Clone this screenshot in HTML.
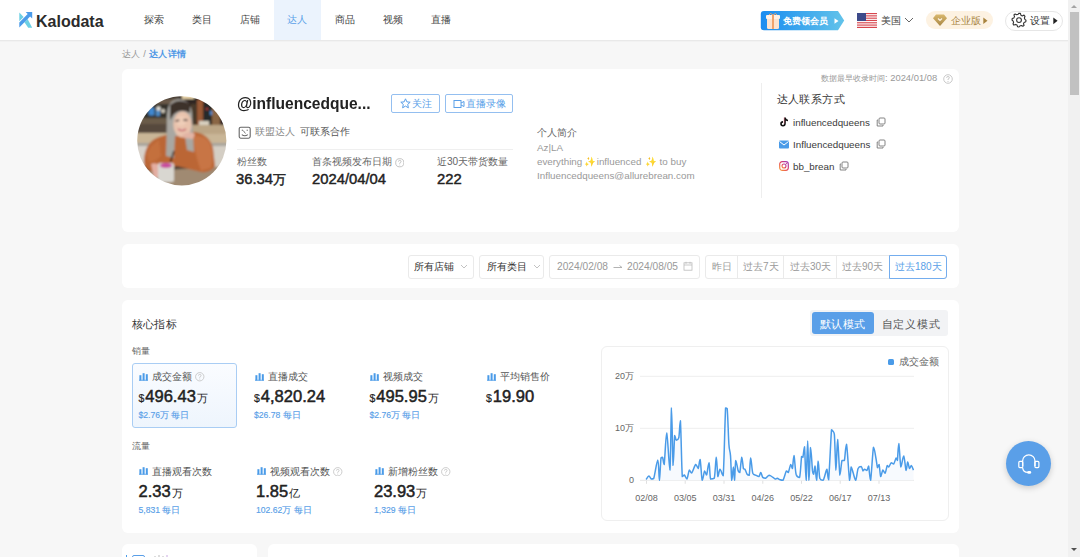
<!DOCTYPE html>
<html><head><meta charset="utf-8">
<style>
*{box-sizing:border-box;margin:0;padding:0}
html,body{width:1080px;height:557px;overflow:hidden}
body{background:#f7f7f7;font-family:"Liberation Sans",sans-serif;color:#333;position:relative}
.a{position:absolute;white-space:nowrap}
.hdr{position:absolute;left:0;top:0;width:1068px;height:40px;background:#fff;box-shadow:0 1px 0 #e9e9e9,0 2px 1px rgba(0,0,0,.02);z-index:2}
.nav{position:absolute;top:0;height:40px;width:47.6px;line-height:40px;text-align:center;font-size:10.2px;color:#444}
.card{position:absolute;background:#fff;border-radius:6px}
.sb{position:absolute;left:1068px;top:0;width:12px;height:557px;background:#f1f1f1}
</style></head><body>

<!-- header -->
<div class="hdr">
  <svg class="a" style="left:14px;top:6px" width="24" height="26" viewBox="14 6 24 26">
    <polygon points="19.3,12.4 23.6,16.9 19.3,21.3" fill="#6ccfe4"/>
    <polygon points="24.4,22.2 27.6,19 32.2,27.7 28.2,27.7" fill="#6ccfe4"/>
    <polygon points="19.3,27.4 19.3,22.4 27.7,14.1 25.7,12.1 32.2,12.1 32.2,18.4 30.1,16.5" fill="#4b9bea"/>
  </svg>
  <div class="a" style="left:36px;top:12px;font-size:16px;font-weight:bold;color:#2b2b2b;line-height:20px">Kalodata</div>
  <div class="nav" style="left:130.2px">探索</div>
  <div class="nav" style="left:178.0px">类目</div>
  <div class="nav" style="left:225.8px">店铺</div>
  <div class="nav" style="left:273.6px;background:#ebf3fd;color:#5a9fe8">达人</div>
  <div class="nav" style="left:321.4px">商品</div>
  <div class="nav" style="left:369.2px">视频</div>
  <div class="nav" style="left:417.0px">直播</div>

  <!-- free member badge -->
  <svg class="a" style="left:760px;top:11px" width="86" height="20" viewBox="0 0 86 20">
    <defs><linearGradient id="g1" x1="0" x2="1"><stop offset="0" stop-color="#1a8cf0"/><stop offset="1" stop-color="#62c3ea"/></linearGradient></defs>
    <path d="M3.8,0 H78 L84.2,9.6 L78,19.2 H3.8 Q0.8,19.2 0.8,16.2 V3 Q0.8,0 3.8,0 Z" fill="url(#g1)"/>
    <rect x="7" y="6" width="12" height="12" rx="1.5" fill="#fbe3cf"/>
    <rect x="6" y="4" width="14" height="4" rx="1" fill="#fff1e6"/>
    <rect x="12" y="4" width="2" height="14" fill="#f0a36b"/>
    <path d="M9,4 Q10,1 13,4 Q16,1 17,4" stroke="#f0a36b" fill="none" stroke-width="1"/>
    <polygon points="74.5,7.2 78.5,10 74.5,12.8" fill="#fff"/>
  </svg>
  <div class="a" style="left:782.5px;top:11px;line-height:20px;font-size:9.3px;font-weight:bold;color:#fff">免费领会员</div>

  <!-- flag -->
  <svg class="a" style="left:857px;top:13px" width="20" height="15" viewBox="0 0 20 15">
    <rect width="20" height="15" fill="#fff"/>
    <g fill="#d7464e"><rect y="0" width="20" height="1.15"/><rect y="2.3" width="20" height="1.15"/><rect y="4.6" width="20" height="1.15"/><rect y="6.9" width="20" height="1.15"/><rect y="9.2" width="20" height="1.15"/><rect y="11.5" width="20" height="1.15"/><rect y="13.8" width="20" height="1.2"/></g>
    <rect width="9" height="8" fill="#3d4a8a"/>
  </svg>
  <div class="a" style="left:880.7px;top:11px;line-height:20px;font-size:10.2px;color:#444">美国</div>
  <svg class="a" style="left:904px;top:17.3px" width="10" height="7" viewBox="0 0 10 7"><path d="M1,1 L5,5 L9,1" stroke="#666" stroke-width="1" fill="none"/></svg>

  <!-- enterprise -->
  <div class="a" style="left:926px;top:11px;width:67px;height:18px;border-radius:9px;background:#fdf2e2"></div>
  <svg class="a" style="left:933px;top:14px" width="14" height="12" viewBox="0 0 14 12">
    <defs><linearGradient id="gd" x1="0" y1="0" x2="0" y2="1"><stop offset="0" stop-color="#d9b86e"/><stop offset="1" stop-color="#a98745"/></linearGradient></defs><polygon points="3,0.5 11,0.5 14,4.3 7,12 0,4.3" fill="url(#gd)"/>
    <path d="M5,4.5 L7,6.5 L9,4.5" stroke="#fdf2e2" stroke-width="1.2" fill="none"/>
  </svg>
  <div class="a" style="left:951px;top:11px;line-height:20px;font-size:10px;color:#a8843f">企业版</div>

  <svg class="a" style="left:983px;top:16.5px" width="5" height="8" viewBox="0 0 5 8"><polygon points="0.3,0.6 4.5,3.8 0.3,7" fill="#a8843f"/></svg>

  <!-- settings -->
  <div class="a" style="left:1005px;top:10.5px;width:58px;height:20px;border-radius:10px;border:1px solid #e6e6e6;background:#fff"></div>
  <svg class="a" style="left:1011px;top:12px" width="16" height="16" viewBox="0 0 16 16">
    <path d="M8,1.2 L9.4,1.4 L9.9,3.2 L11.3,3.9 L13,3.1 L14,4.3 L13.4,6 L13.9,7.4 L15,8.3 L14.8,9.7 L13.1,10.4 L12.5,11.8 L13.1,13.4 L11.9,14.3 L10.3,13.5 L8.8,14 L8,15 L6.6,14.8 L6,13.1 L4.6,12.4 L2.9,13.1 L2,12 L2.6,10.3 L2,8.9 L1,8 L1.2,6.6 L2.9,5.9 L3.5,4.5 L2.9,2.9 L4.1,2 L5.7,2.8 L7.2,2.2 Z" stroke="#333" stroke-width="1.1" fill="none" stroke-linejoin="round"/>
    <circle cx="8" cy="8.1" r="2.4" stroke="#333" stroke-width="1.1" fill="none"/>
  </svg>
  <div class="a" style="left:1030px;top:11px;line-height:20px;font-size:10px;color:#333">设置</div>
  <svg class="a" style="left:1053px;top:16.5px" width="5" height="8" viewBox="0 0 5 8"><polygon points="0.3,0.4 4.6,3.8 0.3,7.2" fill="#222"/></svg>
</div>

<!-- scrollbar -->
<div class="sb">
  <svg class="a" style="left:2px;top:3px" width="8" height="6" viewBox="0 0 8 6"><polygon points="1,5 4,2 7,5" fill="#a3a3a3"/></svg>
  <div class="a" style="left:1.5px;top:12px;width:9.5px;height:83px;background:#c1c1c1"></div>
  <svg class="a" style="left:2px;top:547px" width="8" height="6" viewBox="0 0 8 6"><polygon points="1,1 4,4 7,1" fill="#505050"/></svg>
</div>

<!-- breadcrumb -->
<div class="a" style="left:122px;top:47px;line-height:14px;font-size:9.45px;letter-spacing:0.25px;color:#999">达人 / <span style="color:#4f97e6;font-weight:bold">达人详情</span></div>

<!-- card 1 -->
<div class="card" style="left:122px;top:69px;width:837px;height:163px"></div>
<!-- avatar -->
<svg class="a" style="left:137px;top:96px" width="90" height="90" viewBox="0 0 90 90">
  <defs><clipPath id="cp"><circle cx="44.8" cy="44.8" r="44.6"/></clipPath>
  <filter id="bl" x="-5%" y="-5%" width="110%" height="110%"><feGaussianBlur stdDeviation="0.8"/></filter></defs>
  <g clip-path="url(#cp)"><g filter="url(#bl)">
    <rect x="-5" y="-5" width="100" height="100" fill="#4b4034"/>
    <rect x="-5" y="-5" width="40" height="44" fill="#34332c"/>
    <rect x="14" y="3" width="24" height="5" fill="#6a5a48"/>
    <rect x="0" y="22" width="32" height="6" fill="#6a5c48"/>
    <rect x="0" y="28" width="30" height="12" fill="#574a3c"/>
    <rect x="11.5" y="11.5" width="6" height="8" rx="1" fill="#3f88d0"/>
    <rect x="19" y="14" width="4" height="6" fill="#4d8ac4"/>
    <circle cx="21.5" cy="12.5" r="2.2" fill="#e6e2da"/>
    <circle cx="26" cy="15" r="2" fill="#d8d2c4"/>
    <rect x="42" y="-5" width="55" height="38" fill="#2f2620"/>
    <rect x="45" y="-3" width="12" height="6" fill="#e6d2a8"/>
    <rect x="60" y="4" width="6" height="26" fill="#9a5a34"/>
    <rect x="54" y="8" width="5" height="22" fill="#4a3a2a"/>
    <rect x="67" y="8" width="7" height="22" fill="#262a2a"/>
    <rect x="73" y="15" width="2.5" height="4" fill="#4a8ad0"/>
    <rect x="69" y="12" width="2" height="2" fill="#b03030"/>
    <rect x="75" y="12" width="8" height="22" fill="#8a6644"/>
    <rect x="83" y="20" width="10" height="15" fill="#2a2420"/>
    <rect x="62" y="25" width="10" height="5" fill="#d8d0c0"/>
    <rect x="-5" y="37" width="100" height="10" fill="#c9b697"/>
    <rect x="55" y="29" width="40" height="9" fill="#bba585"/>
    <rect x="-5" y="47" width="100" height="4" fill="#a8a49c"/>
    <rect x="-5" y="50" width="22" height="20" fill="#d8d2ca"/>
    <rect x="70" y="50" width="25" height="22" fill="#d4cec4"/>
    <path d="M-5,76 L95,70 L95,95 L-5,95 Z" fill="#a08a72"/>
    <path d="M7,64 Q8,46 22,41 L32,38 L58,36 Q72,38 76,52 L78,70 Q74,77 64,76 L40,70 L18,76 Q6,74 7,64 Z" fill="#bb6634"/>
    <path d="M56,40 Q70,38 74,50 Q77,62 74,72 L64,75 Q58,60 56,40 Z" fill="#c87444"/>
    <path d="M10,58 Q14,48 22,44 L24,60 Q18,66 12,66 Z" fill="#c4703e"/>
    <path d="M30,20 Q30,4 42,3 Q54,4 55,18 L57,56 L50,54 L48,40 L38,40 L37,62 L29,60 Z" fill="#a9a7a2"/>
    <path d="M33,9 Q42,1 53,8 L53,17 Q44,12 37,18 L33,24 Z" fill="#3d302b"/>
    <ellipse cx="45.5" cy="28.5" rx="9.2" ry="13" fill="#e9c3ad"/>
    <ellipse cx="44" cy="25" rx="5" ry="5" fill="#efcdb8"/>
    <path d="M38.5,25 L42.2,24.3 M46.5,24 L50.5,24.2" stroke="#3f3030" stroke-width="1.4"/>
    <path d="M41,33 Q45,36 49,33" stroke="#c04858" stroke-width="1.5" fill="#f4e8e0"/>
    <path d="M45,39 Q52,34 58,38 L56,43 L47,42 Z" fill="#e2b4a4"/>
    <path d="M14,68 Q19,66 24,70 L24,81 L17,82 Z" fill="#e4aea2"/>
    <rect x="21" y="67" width="16" height="19" rx="2" fill="#d9d7d1"/>
    <ellipse cx="29" cy="69.5" rx="6" ry="2.6" fill="#c84c9e"/>
    <path d="M37,55 L33.5,66" stroke="#151515" stroke-width="1.4"/>
  </g></g>
</svg>
<div class="a" style="left:237px;top:93px;font-size:17.2px;font-weight:bold;color:#222;line-height:20px;transform:scaleX(.905);transform-origin:0 0">@influencedque...</div>
<div class="a" style="left:391px;top:94px;width:49px;height:19px;border:1px solid #94bff0;border-radius:2px"></div>
<svg class="a" style="left:399.5px;top:97.5px" width="11" height="11" viewBox="0 0 11 11"><path d="M5.5,0.8 L6.9,3.9 L10.2,4.2 L7.7,6.4 L8.4,9.8 L5.5,8.1 L2.6,9.8 L3.3,6.4 L0.8,4.2 L4.1,3.9 Z" stroke="#5a9fe8" stroke-width="1" fill="none" stroke-linejoin="round"/></svg>
<div class="a" style="left:412px;top:97px;line-height:14px;font-size:10px;color:#5a9fe8">关注</div>
<div class="a" style="left:445px;top:94px;width:68px;height:19px;border:1px solid #94bff0;border-radius:2px"></div>
<svg class="a" style="left:452.5px;top:98.5px" width="12" height="10" viewBox="0 0 12 10"><rect x="1" y="1.5" width="7" height="7" stroke="#5a9fe8" stroke-width="1" fill="none"/><path d="M8,4 L11,2.5 L11,7.5 L8,6" stroke="#5a9fe8" stroke-width="1" fill="none"/></svg>
<div class="a" style="left:466px;top:97px;line-height:14px;font-size:10px;color:#5a9fe8">直播录像</div>

<svg class="a" style="left:238px;top:125.5px" width="13" height="13" viewBox="0 0 13 13"><rect x="1.2" y="1.2" width="11" height="11" rx="1.6" stroke="#666" stroke-width="1.1" fill="none"/><path d="M4.3,3.6 L4.3,5 M9.2,3.6 L9.2,5" stroke="#777" stroke-width="1"/><path d="M5.4,4.6 L6.8,6.8 L7.6,7.4" stroke="#777" stroke-width="1" fill="none"/><path d="M3.8,8.6 Q6.7,10.8 9.8,8.6" stroke="#666" stroke-width="1.1" fill="none"/></svg>
<div class="a" style="left:255px;top:124.5px;line-height:14px;font-size:10px;color:#888">联盟达人 <span style="color:#555;margin-left:2px">可联系合作</span></div>

<div class="a" style="left:237px;top:149px;width:276px;height:1px;background:#efefef"></div>
<div class="a" style="left:237px;top:155px;line-height:14px;font-size:10.1px;color:#666">粉丝数</div>
<div class="a" style="left:312px;top:155px;line-height:14px;font-size:10.1px;color:#666">首条视频发布日期</div>
<svg class="a" style="left:394.5px;top:158px" width="9.5" height="9.5" viewBox="0 0 10 10"><circle cx="5" cy="5" r="4.3" stroke="#bbb" stroke-width=".9" fill="none"/><path d="M3.6,3.8 Q3.6,2.5 5,2.5 Q6.4,2.5 6.4,3.8 Q6.4,4.6 5,5.2 L5,6" stroke="#bbb" stroke-width=".9" fill="none"/><circle cx="5" cy="7.4" r=".5" fill="#bbb"/></svg>
<div class="a" style="left:437px;top:155px;line-height:14px;font-size:10.1px;color:#666">近30天带货数量</div>
<div class="a" style="left:236px;top:170px;line-height:18px;font-size:14.8px;font-weight:normal;-webkit-text-stroke:0.45px #222;color:#222">36.34<span style="font-size:12.5px">万</span></div>
<div class="a" style="left:312px;top:170px;line-height:18px;font-size:14.8px;font-weight:normal;-webkit-text-stroke:0.45px #222;color:#222">2024/04/04</div>
<div class="a" style="left:437px;top:170px;line-height:18px;font-size:14.8px;font-weight:normal;-webkit-text-stroke:0.45px #222;color:#222">222</div>

<div class="a" style="left:537px;top:126px;line-height:14px;font-size:10px;color:#666">个人简介</div>
<div class="a" style="left:537px;top:141px;line-height:14.2px;font-size:9.8px;color:#999">Az|LA<br>everything<span style="font-size:9.6px;margin:0 1px 0 1.5px">✨</span>influenced <span style="font-size:9.6px;margin:0 2.5px 0 1px">✨</span>to buy<br>Influencedqueens@allurebrean.com</div>

<div class="a" style="left:761px;top:83px;width:1px;height:115px;background:#eee"></div>
<div class="a" style="left:821px;top:71px;line-height:14px;font-size:8.3px;color:#999">数据最早收录时间<span style="font-size:9.4px">: 2024/01/08</span></div>
<svg class="a" style="left:942.5px;top:73.5px" width="10" height="10" viewBox="0 0 10 10"><circle cx="5" cy="5" r="4.3" stroke="#bbb" stroke-width=".8" fill="none"/><path d="M3.6,3.8 Q3.6,2.5 5,2.5 Q6.4,2.5 6.4,3.8 Q6.4,4.6 5,5.2 L5,6" stroke="#bbb" stroke-width=".8" fill="none"/><circle cx="5" cy="7.4" r=".5" fill="#bbb"/></svg>
<div class="a" style="left:776.5px;top:91px;line-height:16px;font-size:11px;letter-spacing:0.45px;color:#333">达人联系方式</div>

<svg class="a" style="left:779px;top:117px" width="10" height="10" viewBox="0 0 10 10"><path d="M5.2,0.5 L6.8,0.5 Q7,2.6 9,2.8 L9,4.3 Q7.6,4.3 6.8,3.6 L6.8,6.6 Q6.8,9.5 4,9.5 Q1.2,9.5 1.2,6.8 Q1.2,4.2 4,4.1 L4,5.7 Q2.8,5.7 2.8,6.8 Q2.8,8 4,8 Q5.2,8 5.2,6.6 Z" fill="#111"/><path d="M5.2,0.5 L5.2,6.6" stroke="#e6395a" stroke-width=".4"/></svg>
<div class="a" style="left:793px;top:115.5px;line-height:14px;font-size:9.8px;color:#3a3a3a">influencedqueens</div>
<svg class="a" style="left:876px;top:117px" width="10" height="10" viewBox="0 0 10 10"><rect x="3" y="1" width="6" height="6" rx="1" stroke="#777" stroke-width=".9" fill="none"/><path d="M2,3 L1.2,3 L1.2,9 L7,9 L7,8" stroke="#777" stroke-width=".9" fill="none"/></svg>
<svg class="a" style="left:779px;top:140px" width="10" height="9" viewBox="0 0 10 9"><rect x="0" y="0.5" width="10" height="8" rx="1" fill="#4a9be8"/><path d="M0.5,1.5 L5,5 L9.5,1.5" stroke="#fff" stroke-width="1" fill="none"/></svg>
<div class="a" style="left:793px;top:137.5px;line-height:14px;font-size:9.8px;color:#3a3a3a">Influencedqueens</div>
<svg class="a" style="left:876px;top:139px" width="10" height="10" viewBox="0 0 10 10"><rect x="3" y="1" width="6" height="6" rx="1" stroke="#777" stroke-width=".9" fill="none"/><path d="M2,3 L1.2,3 L1.2,9 L7,9 L7,8" stroke="#777" stroke-width=".9" fill="none"/></svg>
<svg class="a" style="left:779px;top:161px" width="10" height="10" viewBox="0 0 10 10"><defs><linearGradient id="ig" x1="0" y1="1" x2="1" y2="0"><stop offset="0" stop-color="#f9a23a"/><stop offset=".5" stop-color="#e4405f"/><stop offset="1" stop-color="#9b3bc0"/></linearGradient></defs><rect x="0.7" y="0.7" width="8.6" height="8.6" rx="2.5" stroke="url(#ig)" stroke-width="1.2" fill="none"/><circle cx="5" cy="5" r="2" stroke="url(#ig)" stroke-width="1.1" fill="none"/><circle cx="7.4" cy="2.6" r=".6" fill="#c13584"/></svg>
<div class="a" style="left:793px;top:159.5px;line-height:14px;font-size:9.8px;color:#3a3a3a">bb_brean</div>
<svg class="a" style="left:839px;top:161px" width="10" height="10" viewBox="0 0 10 10"><rect x="3" y="1" width="6" height="6" rx="1" stroke="#777" stroke-width=".9" fill="none"/><path d="M2,3 L1.2,3 L1.2,9 L7,9 L7,8" stroke="#777" stroke-width=".9" fill="none"/></svg>


<!-- card 2 -->
<div class="card" style="left:122px;top:244px;width:837px;height:44px"></div>
<div class="a" style="left:408px;top:255px;width:66px;height:24px;border:1px solid #eaeaea;border-radius:3px"></div>
<div class="a" style="left:414px;top:259px;line-height:15px;font-size:10px;color:#333">所有店铺</div>
<svg class="a" style="left:460px;top:264px" width="8" height="5" viewBox="0 0 8 5"><path d="M1,1 L4,4 L7,1" stroke="#bbb" stroke-width=".9" fill="none"/></svg>
<div class="a" style="left:479px;top:255px;width:65px;height:24px;border:1px solid #eaeaea;border-radius:3px"></div>
<div class="a" style="left:487px;top:259px;line-height:15px;font-size:10px;color:#333">所有类目</div>
<svg class="a" style="left:533px;top:264px" width="8" height="5" viewBox="0 0 8 5"><path d="M1,1 L4,4 L7,1" stroke="#bbb" stroke-width=".9" fill="none"/></svg>
<div class="a" style="left:549px;top:255px;width:151px;height:24px;border:1px solid #eaeaea;border-radius:3px"></div>
<div class="a" style="left:557px;top:259px;line-height:15px;font-size:10.2px;color:#999">2024/02/08</div>
<svg class="a" style="left:613px;top:264px" width="10" height="5" viewBox="0 0 10 5"><path d="M0.5,3.5 L9,3.5 L6.5,1.5" stroke="#aaa" stroke-width=".9" fill="none"/></svg>
<div class="a" style="left:627px;top:259px;line-height:15px;font-size:10.2px;color:#999">2024/08/05</div>
<svg class="a" style="left:683px;top:261px" width="10" height="10" viewBox="0 0 10 10"><rect x="1" y="1.8" width="8" height="7.4" stroke="#bbb" stroke-width=".8" fill="none"/><path d="M1,4 L9,4 M3,0.8 L3,2.8 M7,0.8 L7,2.8" stroke="#bbb" stroke-width=".8"/></svg>
<div class="a" style="left:705px;top:255px;width:242px;height:24px;border:1px solid #eaeaea;border-radius:3px"></div>
<div class="a" style="left:737px;top:256px;width:1px;height:22px;background:#eaeaea"></div>
<div class="a" style="left:783px;top:256px;width:1px;height:22px;background:#eaeaea"></div>
<div class="a" style="left:836px;top:256px;width:1px;height:22px;background:#eaeaea"></div>
<div class="a" style="left:889px;top:255px;width:58px;height:24px;border:1px solid #74adee;border-radius:0 3px 3px 0"></div>
<div class="a" style="left:712px;top:259px;line-height:15px;font-size:10px;color:#999">昨日</div>
<div class="a" style="left:743px;top:259px;line-height:15px;font-size:10px;color:#999">过去7天</div>
<div class="a" style="left:790px;top:259px;line-height:15px;font-size:10px;color:#999">过去30天</div>
<div class="a" style="left:842px;top:259px;line-height:15px;font-size:10px;color:#999">过去90天</div>
<div class="a" style="left:895px;top:259px;line-height:15px;font-size:10px;color:#5a9fe8">过去180天</div>


<!-- card 3 -->
<div class="card" style="left:122px;top:300px;width:837px;height:233px"></div>
<!--M-->
<div class="a" style="left:131.5px;top:315.5px;line-height:16px;font-size:11.3px;letter-spacing:0.4px;color:#333">核心指标</div>
<div class="a" style="left:131.5px;top:344px;line-height:14px;font-size:9.4px;color:#666">销量</div>
<div class="a" style="left:131.5px;top:363px;width:105px;height:65px;border:1px solid #a9cdf4;border-radius:3px;background:linear-gradient(180deg,#fafcff,#eef5fd)"></div>
<svg class="a" style="left:139px;top:372.7px" width="9" height="8" viewBox="0 0 9 8"><rect x="0.4" y="2.2" width="2" height="5.3" fill="#4a9be8"/><rect x="3.6" y="0.2" width="2" height="7.3" fill="#4a9be8"/><rect x="6.8" y="1.2" width="2" height="6.3" fill="#4a9be8"/><rect x="0" y="6.8" width="9" height="0.8" fill="#4a9be8"/></svg><div class="a" style="left:152.0px;top:370.0px;line-height:14px;font-size:10.10px;color:#555">成交金额</div>
<svg class="a" style="left:195px;top:372px" width="9.5" height="9.5" viewBox="0 0 10 10"><circle cx="5" cy="5" r="4.4" stroke="#c4c4c4" stroke-width=".9" fill="none"/><path d="M3.6,3.8 Q3.6,2.5 5,2.5 Q6.4,2.5 6.4,3.8 Q6.4,4.6 5,5.2 L5,6" stroke="#c4c4c4" stroke-width=".9" fill="none"/><circle cx="5" cy="7.4" r=".55" fill="#c4c4c4"/></svg><div class="a" style="left:138.5px;top:386.0px;line-height:20px;font-size:16.5px;font-weight:normal;-webkit-text-stroke:0.5px #222;color:#222"><span style="font-size:10.5px;font-weight:normal;-webkit-text-stroke:0.2px #222;margin-right:1px">$</span>496.43<span style="font-size:10.8px;font-weight:normal;-webkit-text-stroke:0px;margin-left:1px">万</span></div>
<div class="a" style="left:138.5px;top:409.2px;line-height:12px;font-size:8.6px;color:#5a9fe8;-webkit-text-stroke:0.15px #5a9fe8">$2.76万 每日</div>
<svg class="a" style="left:254.5px;top:372.7px" width="9" height="8" viewBox="0 0 9 8"><rect x="0.4" y="2.2" width="2" height="5.3" fill="#4a9be8"/><rect x="3.6" y="0.2" width="2" height="7.3" fill="#4a9be8"/><rect x="6.8" y="1.2" width="2" height="6.3" fill="#4a9be8"/><rect x="0" y="6.8" width="9" height="0.8" fill="#4a9be8"/></svg><div class="a" style="left:267.5px;top:370.0px;line-height:14px;font-size:10.10px;color:#555">直播成交</div>
<div class="a" style="left:254.0px;top:386.0px;line-height:20px;font-size:16.5px;font-weight:normal;-webkit-text-stroke:0.5px #222;color:#222"><span style="font-size:10.5px;font-weight:normal;-webkit-text-stroke:0.2px #222;margin-right:1px">$</span>4,820.24</div>
<div class="a" style="left:254.0px;top:409.2px;line-height:12px;font-size:8.6px;color:#5a9fe8;-webkit-text-stroke:0.15px #5a9fe8">$26.78 每日</div>
<svg class="a" style="left:370px;top:372.7px" width="9" height="8" viewBox="0 0 9 8"><rect x="0.4" y="2.2" width="2" height="5.3" fill="#4a9be8"/><rect x="3.6" y="0.2" width="2" height="7.3" fill="#4a9be8"/><rect x="6.8" y="1.2" width="2" height="6.3" fill="#4a9be8"/><rect x="0" y="6.8" width="9" height="0.8" fill="#4a9be8"/></svg><div class="a" style="left:383.0px;top:370.0px;line-height:14px;font-size:10.10px;color:#555">视频成交</div>
<div class="a" style="left:369.5px;top:386.0px;line-height:20px;font-size:16.5px;font-weight:normal;-webkit-text-stroke:0.5px #222;color:#222"><span style="font-size:10.5px;font-weight:normal;-webkit-text-stroke:0.2px #222;margin-right:1px">$</span>495.95<span style="font-size:10.8px;font-weight:normal;-webkit-text-stroke:0px;margin-left:1px">万</span></div>
<div class="a" style="left:369.5px;top:409.2px;line-height:12px;font-size:8.6px;color:#5a9fe8;-webkit-text-stroke:0.15px #5a9fe8">$2.76万 每日</div>
<svg class="a" style="left:486.5px;top:372.7px" width="9" height="8" viewBox="0 0 9 8"><rect x="0.4" y="2.2" width="2" height="5.3" fill="#4a9be8"/><rect x="3.6" y="0.2" width="2" height="7.3" fill="#4a9be8"/><rect x="6.8" y="1.2" width="2" height="6.3" fill="#4a9be8"/><rect x="0" y="6.8" width="9" height="0.8" fill="#4a9be8"/></svg><div class="a" style="left:499.5px;top:370.0px;line-height:14px;font-size:10.10px;color:#555">平均销售价</div>
<div class="a" style="left:486.0px;top:386.0px;line-height:20px;font-size:16.5px;font-weight:normal;-webkit-text-stroke:0.5px #222;color:#222"><span style="font-size:10.5px;font-weight:normal;-webkit-text-stroke:0.2px #222;margin-right:1px">$</span>19.90</div>
<div class="a" style="left:131.5px;top:439px;line-height:14px;font-size:9.4px;color:#666">流量</div>
<svg class="a" style="left:139px;top:467.2px" width="9" height="8" viewBox="0 0 9 8"><rect x="0.4" y="2.2" width="2" height="5.3" fill="#4a9be8"/><rect x="3.6" y="0.2" width="2" height="7.3" fill="#4a9be8"/><rect x="6.8" y="1.2" width="2" height="6.3" fill="#4a9be8"/><rect x="0" y="6.8" width="9" height="0.8" fill="#4a9be8"/></svg><div class="a" style="left:152.0px;top:464.5px;line-height:14px;font-size:10.10px;color:#555">直播观看次数</div>
<div class="a" style="left:138.5px;top:480.5px;line-height:20px;font-size:16.5px;font-weight:normal;-webkit-text-stroke:0.5px #222;color:#222">2.33<span style="font-size:10.8px;font-weight:normal;-webkit-text-stroke:0px;margin-left:1px">万</span></div>
<div class="a" style="left:138.5px;top:503.7px;line-height:12px;font-size:8.6px;color:#5a9fe8;-webkit-text-stroke:0.15px #5a9fe8">5,831 每日</div>
<svg class="a" style="left:256.5px;top:467.2px" width="9" height="8" viewBox="0 0 9 8"><rect x="0.4" y="2.2" width="2" height="5.3" fill="#4a9be8"/><rect x="3.6" y="0.2" width="2" height="7.3" fill="#4a9be8"/><rect x="6.8" y="1.2" width="2" height="6.3" fill="#4a9be8"/><rect x="0" y="6.8" width="9" height="0.8" fill="#4a9be8"/></svg><div class="a" style="left:269.5px;top:464.5px;line-height:14px;font-size:10.10px;color:#555">视频观看次数</div>
<svg class="a" style="left:333px;top:466.5px" width="9.5" height="9.5" viewBox="0 0 10 10"><circle cx="5" cy="5" r="4.4" stroke="#c4c4c4" stroke-width=".9" fill="none"/><path d="M3.6,3.8 Q3.6,2.5 5,2.5 Q6.4,2.5 6.4,3.8 Q6.4,4.6 5,5.2 L5,6" stroke="#c4c4c4" stroke-width=".9" fill="none"/><circle cx="5" cy="7.4" r=".55" fill="#c4c4c4"/></svg><div class="a" style="left:256.0px;top:480.5px;line-height:20px;font-size:16.5px;font-weight:normal;-webkit-text-stroke:0.5px #222;color:#222">1.85<span style="font-size:10.8px;font-weight:normal;-webkit-text-stroke:0px;margin-left:1px">亿</span></div>
<div class="a" style="left:256.0px;top:503.7px;line-height:12px;font-size:8.6px;color:#5a9fe8;-webkit-text-stroke:0.15px #5a9fe8">102.62万 每日</div>
<svg class="a" style="left:374.5px;top:467.2px" width="9" height="8" viewBox="0 0 9 8"><rect x="0.4" y="2.2" width="2" height="5.3" fill="#4a9be8"/><rect x="3.6" y="0.2" width="2" height="7.3" fill="#4a9be8"/><rect x="6.8" y="1.2" width="2" height="6.3" fill="#4a9be8"/><rect x="0" y="6.8" width="9" height="0.8" fill="#4a9be8"/></svg><div class="a" style="left:387.5px;top:464.5px;line-height:14px;font-size:10.10px;color:#555">新增粉丝数</div>
<svg class="a" style="left:441px;top:466.5px" width="9.5" height="9.5" viewBox="0 0 10 10"><circle cx="5" cy="5" r="4.4" stroke="#c4c4c4" stroke-width=".9" fill="none"/><path d="M3.6,3.8 Q3.6,2.5 5,2.5 Q6.4,2.5 6.4,3.8 Q6.4,4.6 5,5.2 L5,6" stroke="#c4c4c4" stroke-width=".9" fill="none"/><circle cx="5" cy="7.4" r=".55" fill="#c4c4c4"/></svg><div class="a" style="left:374.0px;top:480.5px;line-height:20px;font-size:16.5px;font-weight:normal;-webkit-text-stroke:0.5px #222;color:#222">23.93<span style="font-size:10.8px;font-weight:normal;-webkit-text-stroke:0px;margin-left:1px">万</span></div>
<div class="a" style="left:374.0px;top:503.7px;line-height:12px;font-size:8.6px;color:#5a9fe8;-webkit-text-stroke:0.15px #5a9fe8">1,329 每日</div>
<!--/M-->

<div class="a" style="left:810px;top:310px;width:138px;height:26px;border-radius:3px;background:#f2f3f5"></div>
<div class="a" style="left:812px;top:312px;width:62px;height:22px;border-radius:3px;background:#5a9fe8"></div>
<div class="a" style="left:819.5px;top:315.5px;line-height:16px;font-size:11px;letter-spacing:0.6px;color:#fff">默认模式</div>
<div class="a" style="left:881.5px;top:315.5px;line-height:16px;font-size:11px;letter-spacing:0.75px;color:#555">自定义模式</div>
<div class="a" style="left:601px;top:346px;width:348px;height:175px;border:1px solid #efefef;border-radius:6px"></div>
<svg class="a" style="left:0;top:0" width="1080" height="557" viewBox="0 0 1080 557">
<g transform="translate(0,0.8)">
<g stroke="#eeeeee" stroke-width="1"><line x1="640" y1="375.5" x2="914" y2="375.5"/><line x1="640" y1="427.5" x2="914" y2="427.5"/></g>
<line x1="640" y1="479.5" x2="914" y2="479.5" stroke="#e6e6e6" stroke-width="1"/>
<g stroke="#e0e0e0" stroke-width="1"><line x1="646.5" y1="479.5" x2="646.5" y2="483"/><line x1="685.2" y1="479.5" x2="685.2" y2="483"/><line x1="724.0" y1="479.5" x2="724.0" y2="483"/><line x1="762.8" y1="479.5" x2="762.8" y2="483"/><line x1="801.5" y1="479.5" x2="801.5" y2="483"/><line x1="840.2" y1="479.5" x2="840.2" y2="483"/><line x1="879.0" y1="479.5" x2="879.0" y2="483"/></g>
<path d="M646.1,478.7 C646.6,478.1 648.0,475.4 648.9,475.3 C649.8,475.3 650.5,477.8 651.3,478.2 C652.1,478.2 652.6,478.2 653.7,477.7 C654.8,474.6 656.8,459.3 657.8,459.3 C658.8,459.6 658.9,479.5 659.4,479.5 C659.9,479.1 660.5,461.1 661.0,457.2 C661.5,456.4 662.1,456.4 662.6,456.4 C663.1,457.5 663.5,463.7 664.2,463.7 C664.9,459.7 665.8,432.2 666.7,432.2 C667.7,433.1 669.1,469.3 669.9,469.3 C670.7,465.1 671.0,407.9 671.5,407.1 C672.0,407.1 672.6,459.9 673.1,464.5 C673.6,464.5 674.2,438.8 674.7,434.6 C675.2,434.6 675.6,439.0 676.3,439.4 C677.0,439.4 678.1,439.4 678.8,437.0 C679.5,433.8 679.8,420.0 680.4,420.0 C681.0,426.5 681.6,466.8 682.3,475.8 C683.0,475.8 683.6,474.2 684.4,474.2 C685.2,474.6 686.1,478.2 686.9,478.2 C687.7,477.4 688.5,470.3 689.3,469.3 C690.1,469.3 690.6,472.2 691.7,472.2 C692.8,471.3 694.6,464.4 695.7,463.7 C696.8,463.7 697.5,467.7 698.2,467.7 C698.9,466.9 699.4,458.8 700.1,458.8 C700.8,460.8 701.5,477.6 702.2,479.5 C703.0,479.5 703.9,471.0 704.6,470.1 C705.3,470.1 705.9,474.2 706.6,474.2 C707.3,472.8 708.3,462.0 709.0,462.0 C709.7,462.7 709.7,475.6 710.6,478.2 C711.5,478.2 713.3,478.2 714.3,477.4 C715.2,473.8 715.7,456.7 716.3,456.4 C716.9,456.4 717.3,473.8 717.9,475.8 C718.5,475.8 719.1,468.6 720.0,468.5 C720.9,468.5 722.3,475.0 723.2,475.0 C724.1,464.8 724.9,418.3 725.6,407.1 C726.3,407.1 726.7,407.1 727.2,407.9 C727.8,414.0 728.4,435.7 728.9,443.5 C729.4,451.3 730.0,448.8 730.5,454.8 C731.0,460.8 731.3,477.6 731.8,479.5 C732.3,479.5 732.9,466.1 733.4,466.1 C733.9,466.1 734.1,479.5 734.5,479.5 C734.9,478.4 735.2,461.2 735.8,459.6 C736.4,459.6 737.5,468.1 738.2,470.1 C738.9,471.7 739.2,471.7 739.8,471.7 C740.4,469.4 741.2,457.1 741.8,456.4 C742.4,456.4 742.9,465.7 743.4,467.7 C743.9,468.5 744.4,467.7 745.0,468.5 C745.6,469.4 746.4,472.4 747.1,473.4 C747.8,474.4 748.6,474.5 749.2,474.5 C749.8,471.8 750.1,457.5 750.7,457.2 C751.3,457.2 751.9,469.6 752.8,472.5 C753.7,474.5 755.0,473.9 756.0,474.5 C757.0,475.1 758.1,475.8 758.9,475.8 C759.7,475.3 760.1,471.7 760.8,471.7 C761.4,471.8 762.0,475.7 762.8,476.6 C763.6,477.4 764.6,477.4 765.7,477.4 C766.8,477.0 768.0,474.6 769.2,474.5 C770.4,474.5 772.0,476.0 773.0,476.6 C774.0,477.2 774.7,478.1 775.4,478.2 C776.1,478.2 776.5,477.4 777.3,477.4 C778.1,477.5 779.2,478.6 780.2,479.0 C781.2,479.4 782.0,479.5 783.0,479.5 C784.0,478.0 785.5,471.4 786.4,470.1 C787.3,470.1 787.6,471.7 788.3,471.7 C789.0,470.6 790.0,464.4 790.7,463.7 C791.4,463.7 791.9,467.7 792.4,467.7 C792.9,466.2 793.4,454.8 794.0,454.8 C794.6,455.8 795.2,469.8 796.1,473.4 C797.0,476.6 798.7,476.6 799.6,476.6 C800.5,473.6 801.1,459.0 801.6,455.6 C802.1,455.6 802.4,456.4 802.9,456.4 C803.4,454.8 804.0,445.9 804.5,445.9 C805.0,449.8 805.6,479.5 806.1,479.5 C806.6,478.6 807.2,440.2 807.7,440.2 C808.2,440.2 808.5,478.4 809.0,479.5 C809.5,479.5 810.0,448.3 810.6,446.7 C811.2,446.7 812.0,465.7 812.5,470.1 C813.0,473.4 813.3,473.4 813.7,473.4 C814.1,472.6 814.5,465.3 815.0,465.3 C815.5,466.3 816.1,479.5 816.6,479.5 C817.1,478.7 817.7,460.8 818.2,460.4 C818.7,460.4 819.0,474.2 819.8,477.4 C820.6,479.5 822.1,479.5 823.0,479.5 C823.9,479.0 824.4,476.0 825.0,474.2 C825.6,472.4 826.3,468.5 826.9,468.5 C827.5,469.3 827.8,479.0 828.6,479.0 C829.4,472.4 830.8,437.0 831.5,428.9 C832.2,428.9 832.6,429.7 833.1,430.5 C833.6,431.3 833.9,430.5 834.4,433.8 C834.9,440.3 835.5,468.5 836.0,469.3 C836.5,469.3 837.0,438.6 837.6,438.6 C838.2,439.4 839.2,470.7 839.9,474.2 C840.6,474.2 841.2,462.0 842.0,459.6 C842.8,459.6 843.6,459.6 844.4,459.6 C845.1,456.9 845.6,443.5 846.5,443.5 C847.4,446.8 848.8,475.7 849.6,479.5 C850.4,479.5 850.6,467.3 851.2,466.1 C851.8,466.1 852.5,470.3 853.3,472.5 C854.0,474.7 854.9,479.5 855.7,479.5 C856.5,478.7 857.2,470.0 858.1,467.7 C859.0,465.8 860.5,465.8 861.3,465.8 C862.1,466.2 862.5,469.7 863.0,470.1 C863.5,470.1 863.9,468.6 864.6,468.5 C865.3,468.5 866.3,469.6 867.0,469.6 C867.7,469.1 868.0,465.3 868.6,465.3 C869.2,466.9 869.8,479.5 870.6,479.5 C871.4,476.4 872.6,450.1 873.5,446.4 C874.4,446.4 875.2,453.8 875.9,457.2 C876.6,460.6 877.0,465.8 877.5,466.9 C878.0,466.9 878.6,463.7 879.1,463.7 C879.6,465.2 880.1,474.9 880.7,475.8 C881.3,475.8 882.1,469.9 882.8,469.3 C883.5,469.3 884.4,472.5 885.1,472.5 C885.8,471.8 886.6,465.9 887.2,464.8 C887.8,464.8 888.1,466.1 888.8,466.1 C889.5,465.6 890.4,462.5 891.2,462.0 C892.0,462.0 892.9,463.2 893.7,463.2 C894.5,462.4 895.5,457.8 896.1,457.2 C896.7,457.2 897.0,459.6 897.4,459.6 C897.8,457.2 898.2,442.7 898.8,442.7 C899.4,443.8 900.1,464.0 900.9,466.1 C901.7,466.1 902.8,455.1 903.7,455.1 C904.6,455.7 905.4,468.6 906.1,469.6 C906.8,469.6 907.1,461.5 907.7,461.2 C908.3,461.2 908.9,467.1 909.5,467.7 C910.1,467.7 910.7,464.8 911.4,464.8 C912.1,465.1 913.1,468.6 913.5,469.3 L913.5,479.5 L646.1,479.5 Z" fill="#f7fafe"/>
<path d="M646.1,478.7 C646.6,478.1 648.0,475.4 648.9,475.3 C649.8,475.3 650.5,477.8 651.3,478.2 C652.1,478.2 652.6,478.2 653.7,477.7 C654.8,474.6 656.8,459.3 657.8,459.3 C658.8,459.6 658.9,479.5 659.4,479.5 C659.9,479.1 660.5,461.1 661.0,457.2 C661.5,456.4 662.1,456.4 662.6,456.4 C663.1,457.5 663.5,463.7 664.2,463.7 C664.9,459.7 665.8,432.2 666.7,432.2 C667.7,433.1 669.1,469.3 669.9,469.3 C670.7,465.1 671.0,407.9 671.5,407.1 C672.0,407.1 672.6,459.9 673.1,464.5 C673.6,464.5 674.2,438.8 674.7,434.6 C675.2,434.6 675.6,439.0 676.3,439.4 C677.0,439.4 678.1,439.4 678.8,437.0 C679.5,433.8 679.8,420.0 680.4,420.0 C681.0,426.5 681.6,466.8 682.3,475.8 C683.0,475.8 683.6,474.2 684.4,474.2 C685.2,474.6 686.1,478.2 686.9,478.2 C687.7,477.4 688.5,470.3 689.3,469.3 C690.1,469.3 690.6,472.2 691.7,472.2 C692.8,471.3 694.6,464.4 695.7,463.7 C696.8,463.7 697.5,467.7 698.2,467.7 C698.9,466.9 699.4,458.8 700.1,458.8 C700.8,460.8 701.5,477.6 702.2,479.5 C703.0,479.5 703.9,471.0 704.6,470.1 C705.3,470.1 705.9,474.2 706.6,474.2 C707.3,472.8 708.3,462.0 709.0,462.0 C709.7,462.7 709.7,475.6 710.6,478.2 C711.5,478.2 713.3,478.2 714.3,477.4 C715.2,473.8 715.7,456.7 716.3,456.4 C716.9,456.4 717.3,473.8 717.9,475.8 C718.5,475.8 719.1,468.6 720.0,468.5 C720.9,468.5 722.3,475.0 723.2,475.0 C724.1,464.8 724.9,418.3 725.6,407.1 C726.3,407.1 726.7,407.1 727.2,407.9 C727.8,414.0 728.4,435.7 728.9,443.5 C729.4,451.3 730.0,448.8 730.5,454.8 C731.0,460.8 731.3,477.6 731.8,479.5 C732.3,479.5 732.9,466.1 733.4,466.1 C733.9,466.1 734.1,479.5 734.5,479.5 C734.9,478.4 735.2,461.2 735.8,459.6 C736.4,459.6 737.5,468.1 738.2,470.1 C738.9,471.7 739.2,471.7 739.8,471.7 C740.4,469.4 741.2,457.1 741.8,456.4 C742.4,456.4 742.9,465.7 743.4,467.7 C743.9,468.5 744.4,467.7 745.0,468.5 C745.6,469.4 746.4,472.4 747.1,473.4 C747.8,474.4 748.6,474.5 749.2,474.5 C749.8,471.8 750.1,457.5 750.7,457.2 C751.3,457.2 751.9,469.6 752.8,472.5 C753.7,474.5 755.0,473.9 756.0,474.5 C757.0,475.1 758.1,475.8 758.9,475.8 C759.7,475.3 760.1,471.7 760.8,471.7 C761.4,471.8 762.0,475.7 762.8,476.6 C763.6,477.4 764.6,477.4 765.7,477.4 C766.8,477.0 768.0,474.6 769.2,474.5 C770.4,474.5 772.0,476.0 773.0,476.6 C774.0,477.2 774.7,478.1 775.4,478.2 C776.1,478.2 776.5,477.4 777.3,477.4 C778.1,477.5 779.2,478.6 780.2,479.0 C781.2,479.4 782.0,479.5 783.0,479.5 C784.0,478.0 785.5,471.4 786.4,470.1 C787.3,470.1 787.6,471.7 788.3,471.7 C789.0,470.6 790.0,464.4 790.7,463.7 C791.4,463.7 791.9,467.7 792.4,467.7 C792.9,466.2 793.4,454.8 794.0,454.8 C794.6,455.8 795.2,469.8 796.1,473.4 C797.0,476.6 798.7,476.6 799.6,476.6 C800.5,473.6 801.1,459.0 801.6,455.6 C802.1,455.6 802.4,456.4 802.9,456.4 C803.4,454.8 804.0,445.9 804.5,445.9 C805.0,449.8 805.6,479.5 806.1,479.5 C806.6,478.6 807.2,440.2 807.7,440.2 C808.2,440.2 808.5,478.4 809.0,479.5 C809.5,479.5 810.0,448.3 810.6,446.7 C811.2,446.7 812.0,465.7 812.5,470.1 C813.0,473.4 813.3,473.4 813.7,473.4 C814.1,472.6 814.5,465.3 815.0,465.3 C815.5,466.3 816.1,479.5 816.6,479.5 C817.1,478.7 817.7,460.8 818.2,460.4 C818.7,460.4 819.0,474.2 819.8,477.4 C820.6,479.5 822.1,479.5 823.0,479.5 C823.9,479.0 824.4,476.0 825.0,474.2 C825.6,472.4 826.3,468.5 826.9,468.5 C827.5,469.3 827.8,479.0 828.6,479.0 C829.4,472.4 830.8,437.0 831.5,428.9 C832.2,428.9 832.6,429.7 833.1,430.5 C833.6,431.3 833.9,430.5 834.4,433.8 C834.9,440.3 835.5,468.5 836.0,469.3 C836.5,469.3 837.0,438.6 837.6,438.6 C838.2,439.4 839.2,470.7 839.9,474.2 C840.6,474.2 841.2,462.0 842.0,459.6 C842.8,459.6 843.6,459.6 844.4,459.6 C845.1,456.9 845.6,443.5 846.5,443.5 C847.4,446.8 848.8,475.7 849.6,479.5 C850.4,479.5 850.6,467.3 851.2,466.1 C851.8,466.1 852.5,470.3 853.3,472.5 C854.0,474.7 854.9,479.5 855.7,479.5 C856.5,478.7 857.2,470.0 858.1,467.7 C859.0,465.8 860.5,465.8 861.3,465.8 C862.1,466.2 862.5,469.7 863.0,470.1 C863.5,470.1 863.9,468.6 864.6,468.5 C865.3,468.5 866.3,469.6 867.0,469.6 C867.7,469.1 868.0,465.3 868.6,465.3 C869.2,466.9 869.8,479.5 870.6,479.5 C871.4,476.4 872.6,450.1 873.5,446.4 C874.4,446.4 875.2,453.8 875.9,457.2 C876.6,460.6 877.0,465.8 877.5,466.9 C878.0,466.9 878.6,463.7 879.1,463.7 C879.6,465.2 880.1,474.9 880.7,475.8 C881.3,475.8 882.1,469.9 882.8,469.3 C883.5,469.3 884.4,472.5 885.1,472.5 C885.8,471.8 886.6,465.9 887.2,464.8 C887.8,464.8 888.1,466.1 888.8,466.1 C889.5,465.6 890.4,462.5 891.2,462.0 C892.0,462.0 892.9,463.2 893.7,463.2 C894.5,462.4 895.5,457.8 896.1,457.2 C896.7,457.2 897.0,459.6 897.4,459.6 C897.8,457.2 898.2,442.7 898.8,442.7 C899.4,443.8 900.1,464.0 900.9,466.1 C901.7,466.1 902.8,455.1 903.7,455.1 C904.6,455.7 905.4,468.6 906.1,469.6 C906.8,469.6 907.1,461.5 907.7,461.2 C908.3,461.2 908.9,467.1 909.5,467.7 C910.1,467.7 910.7,464.8 911.4,464.8 C912.1,465.1 913.1,468.6 913.5,469.3" fill="none" stroke="#4a9be8" stroke-width="1.5" stroke-linejoin="round"/>
</g>
<g font-family="Liberation Sans, sans-serif" font-size="9" fill="#666">
<text x="634" y="378.5" text-anchor="end">20万</text>
<text x="634" y="430.5" text-anchor="end">10万</text>
<text x="634" y="482.5" text-anchor="end">0</text>
<text x="646.5" y="501" text-anchor="middle">02/08</text><text x="685.2" y="501" text-anchor="middle">03/05</text><text x="724.0" y="501" text-anchor="middle">03/31</text><text x="762.8" y="501" text-anchor="middle">04/26</text><text x="801.5" y="501" text-anchor="middle">05/22</text><text x="840.2" y="501" text-anchor="middle">06/17</text><text x="879.0" y="501" text-anchor="middle">07/13</text></g></svg>
<div class="a" style="left:888px;top:359px;width:6px;height:6px;border-radius:1.5px;background:#4a9be8"></div>
<div class="a" style="left:899px;top:355px;line-height:14px;font-size:9.8px;color:#666">成交金额</div>


<!-- card 4 -->
<div class="card" style="left:122px;top:544px;width:135px;height:40px"></div>
<div class="card" style="left:268px;top:544px;width:691px;height:40px"></div>
<div class="a" style="left:125.5px;top:554.5px;width:1.2px;height:6px;background:#4a9be8"></div>
<div class="a" style="left:132px;top:554.8px;width:12.5px;height:8px;border:1.2px solid #5a9fe8;border-radius:2px"></div>
<div class="a" style="left:154px;top:555.5px;width:2px;height:3px;background:#ddd"></div>
<div class="a" style="left:158px;top:555px;width:1.5px;height:3px;background:#ddd"></div>
<div class="a" style="left:162px;top:555.5px;width:2px;height:3px;background:#ddd"></div>
<div class="a" style="left:166px;top:555px;width:2px;height:3px;background:#e4d4f0"></div>


<!-- support button -->
<div class="a" style="left:1006px;top:441px;width:45px;height:45px;border-radius:50%;background:#5a9fe8;box-shadow:0 2px 6px rgba(0,0,0,.18)"></div>
<svg class="a" style="left:1006px;top:441px" width="45" height="45" viewBox="1006 441 45 45">
<path d="M1022.6,466 L1022.6,461 A6.2,6.2 0 0 1 1035,461 L1035,466" stroke="#fff" stroke-width="1.3" fill="none"/>
<rect x="1018.8" y="461.4" width="4" height="6.2" rx="1" stroke="#fff" stroke-width="1.2" fill="none"/>
<rect x="1034.9" y="461.4" width="4" height="6.2" rx="1" stroke="#fff" stroke-width="1.2" fill="none"/>
<path d="M1022.6,467.6 Q1023,472.4 1028,472.4" stroke="#fff" stroke-width="1.2" fill="none"/>
<rect x="1027.2" y="471" width="4" height="2.8" rx="1.4" fill="#fff"/>
</svg>

</body></html>
